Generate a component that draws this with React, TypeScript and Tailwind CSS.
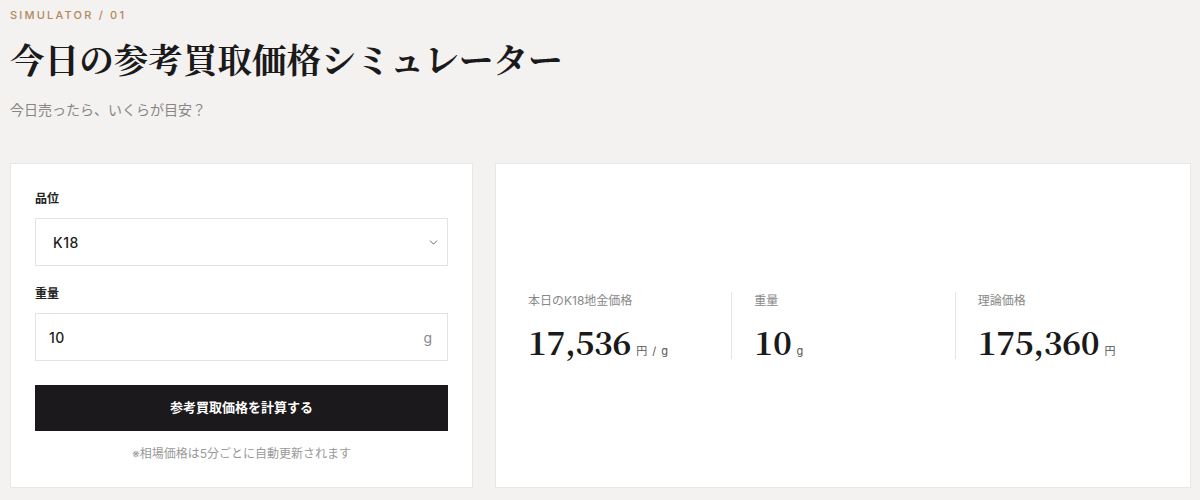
import { ChevronDown } from "lucide-react";

const jp = "font-['Inter','Noto_Sans_CJK_JP',sans-serif]";
const serifNum = "font-['Noto_Serif_CJK_JP','Liberation_Serif',serif]";

type ResultItem = {
  label: string;
  value: string;
  unit: string;
};

const results: ResultItem[] = [
  { label: "本日のK18地金価格", value: "17,536", unit: "円 / g" },
  { label: "重量", value: "10", unit: "g" },
  { label: "理論価格", value: "175,360", unit: "円" },
];

function SimulatorForm() {
  return (
    <section className="w-[463px] shrink-0 border border-[#ebe6e6] bg-white px-[24px] pt-[26px] pb-[24px]">
      <label className="block text-[12px] font-bold leading-[18px] text-[#222]">
        品位
      </label>
      <div className="mt-[10px] flex h-[48px] items-center justify-between border border-[#e6e2e2] pl-[17px] pr-[7px]">
        <span className="text-[14px] font-medium tracking-[0.5px] text-[#1c1c1c]">K18</span>
        <ChevronDown className="h-[13px] w-[13px] text-[#555]" strokeWidth={1.6} />
      </div>

      <label className="mt-[19px] block text-[12px] font-bold leading-[18px] text-[#222]">
        重量
      </label>
      <div className="mt-[10px] flex h-[48px] items-center justify-between border border-[#e6e2e2] pl-[13px] pr-[15px]">
        <span className="text-[14px] font-medium tracking-[0.5px] text-[#1c1c1c]">10</span>
        <span className="text-[14px] text-[#888]">g</span>
      </div>

      <button
        type="button"
        className="mt-[24px] flex h-[46px] w-full items-center justify-center bg-[#1b191c] text-[13px] font-bold text-white"
      >
        参考買取価格を計算する
      </button>

      <p className="mt-[14px] text-center text-[12px] leading-[18px] text-[#999]">
        ※相場価格は5分ごとに自動更新されます
      </p>
    </section>
  );
}

function SimulatorResult() {
  return (
    <section className="flex flex-1 items-center border border-[#ebe6e6] bg-white px-[12px]">
      <div className="grid w-full grid-cols-3">
        {results.map((item, index) => (
          <div
            key={item.label}
            className={
              index === 0
                ? "pl-[20px]"
                : "border-l border-[#e8e4e4] pl-[22px]"
            }
          >
            <p className="text-[12px] leading-[18px] text-[#888]">{item.label}</p>
            <p className="mt-[15px] flex items-baseline gap-[5px]">
              <span className={`${serifNum} text-[32px] font-bold leading-none tracking-[-0.3px] text-[#1a1a1a]`}>
                {item.value}
              </span>
              <span className="text-[11px] tracking-[1px] text-[#555]">{item.unit}</span>
            </p>
          </div>
        ))}
      </div>
    </section>
  );
}

export default function App() {
  return (
    <div className={`${jp} min-h-[500px] w-[1200px] bg-[#f4f1f1] pt-[6px]`}>
      <div className="px-[10px]">
        <p className="text-[11px] font-medium leading-[18px] tracking-[0.2em] text-[#b08a58]">
          SIMULATOR / 01
        </p>
        <h1 className="mt-[12px] font-['Noto_Serif_CJK_JP','Noto_Sans_CJK_JP',serif] text-[34.6px] font-bold leading-[44px] text-[#1a1a1a]">
          今日の参考買取価格シミュレーター
        </h1>
        <p className="mt-[20px] text-[14px] leading-[20px] text-[#8a8585]">
          今日売ったら、いくらが目安？
        </p>
      </div>

      <div className="mt-[43px] flex h-[325px] gap-[22px] pl-[10px] pr-[9px]">
        <SimulatorForm />
        <SimulatorResult />
      </div>
    </div>
  );
}
